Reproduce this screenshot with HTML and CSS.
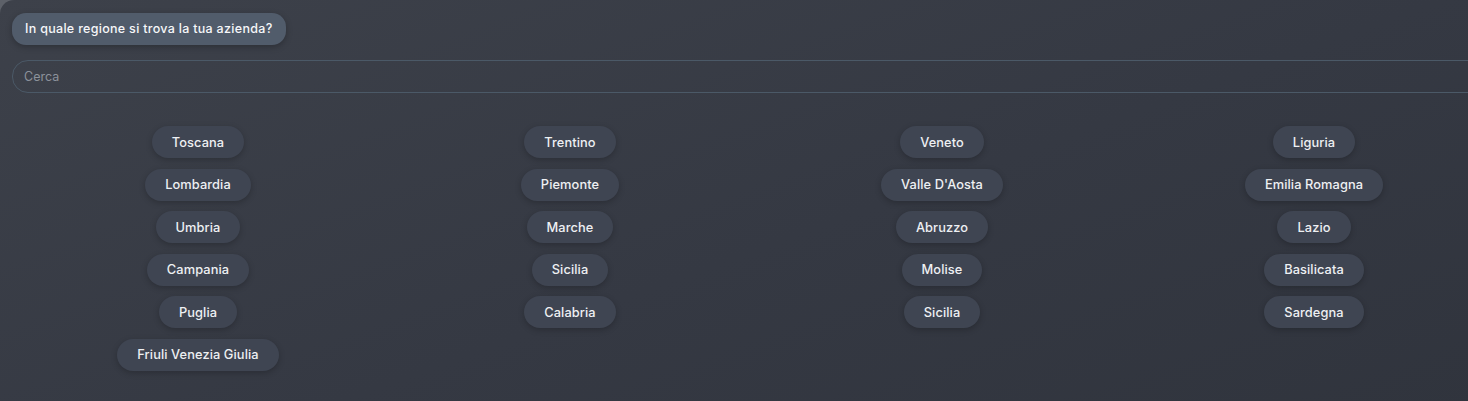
FILE: index.html
```html
<!DOCTYPE html>
<html lang="it">
<head>
<meta charset="utf-8">
<title>Regione</title>
<link rel="stylesheet" href="styles.css">
</head>
<body>
<div class="panel">
  <div class="bubble">In quale regione si trova la tua azienda?</div>
  <input class="search" type="text" placeholder="Cerca">
  <div class="grid">
    <button class="pill">Toscana</button>
    <button class="pill">Trentino</button>
    <button class="pill">Veneto</button>
    <button class="pill">Liguria</button>
    <button class="pill">Lombardia</button>
    <button class="pill">Piemonte</button>
    <button class="pill">Valle D'Aosta</button>
    <button class="pill">Emilia Romagna</button>
    <button class="pill">Umbria</button>
    <button class="pill">Marche</button>
    <button class="pill">Abruzzo</button>
    <button class="pill">Lazio</button>
    <button class="pill">Campania</button>
    <button class="pill">Sicilia</button>
    <button class="pill">Molise</button>
    <button class="pill">Basilicata</button>
    <button class="pill">Puglia</button>
    <button class="pill">Calabria</button>
    <button class="pill">Sicilia</button>
    <button class="pill">Sardegna</button>
    <button class="pill">Friuli Venezia Giulia</button>
  </div>
</div>
</body>
</html>
```
FILE: styles.css
```css
html, body {
  margin: 0;
  padding: 0;
  background: #5d6169;
  overflow: hidden;
  font-family: "Inter", "Open Sans", sans-serif;
}

.panel {
  width: 1520px;
  height: 401px;
  box-sizing: border-box;
  padding: 13px 0 0 12px;
  border-top-left-radius: 14px;
  background: linear-gradient(160deg, #3d414a 0%, #353943 55%, #30343d 100%);
  display: flex;
  flex-direction: column;
  align-items: flex-start;
}

.bubble {
  height: 32px;
  line-height: 32px;
  padding: 0 13px;
  border-radius: 14px;
  background: #515c6b;
  color: #f6f7f9;
  font-size: 12.5px;
  font-weight: 500;
  letter-spacing: 0.3px;
  box-shadow: 0 2px 6px rgba(0, 0, 0, 0.25);
}

.search {
  margin-top: 15px;
  width: 1500px;
  height: 33px;
  box-sizing: border-box;
  padding: 0 11px;
  border: 1px solid #4b5967;
  border-radius: 16px;
  background: transparent;
  color: #d0d4da;
  font-family: inherit;
  font-size: 12.5px;
  outline: none;
}

.search::placeholder {
  color: #8c929b;
}

.grid {
  margin-top: 33px;
  width: 1488px;
  display: grid;
  grid-template-columns: repeat(4, 372px);
  grid-auto-rows: 32px;
  row-gap: 10.6px;
  justify-items: center;
}

.pill {
  height: 32px;
  padding: 0 20px;
  border: none;
  border-radius: 16px;
  background: #3f4552;
  color: #eef0f3;
  font-family: inherit;
  font-size: 12.8px;
  font-weight: 500;
  letter-spacing: 0.1px;
  box-shadow: 0 2px 6px rgba(0, 0, 0, 0.22);
  cursor: pointer;
}
```
